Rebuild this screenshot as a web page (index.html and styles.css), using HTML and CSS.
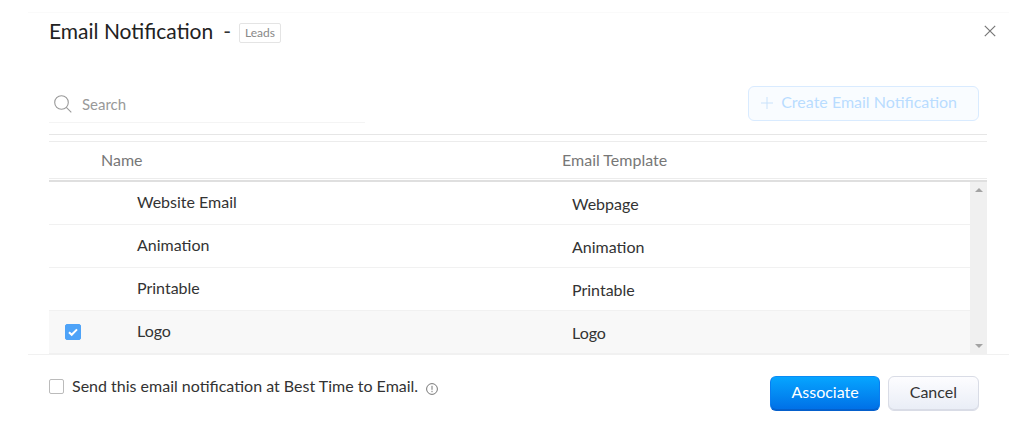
FILE: index.html
```html
<!DOCTYPE html>
<html lang="en">
<head>
  <meta charset="UTF-8" />
  <meta name="viewport" content="width=device-width, initial-scale=1.0"/>
  <title>Email Notification</title>
  <link rel="stylesheet" href="styles.css">
</head>
<body>
  <div class="dialog">
    <header class="dialog-header">
      <h1>Email Notification</h1>
      <span class="dash">-</span>
      <span class="module-tag">Leads</span>
      <button class="close-btn" type="button" aria-label="Close">
        <svg width="12" height="12" viewBox="0 0 12 12"><path d="M.8 .8 11.2 11.2M11.2 .8 .8 11.2"/></svg>
      </button>
    </header>

    <main class="dialog-body">
      <div class="toolbar">
        <label class="search">
          <svg width="18" height="18" viewBox="0 0 18 18"><circle cx="7.5" cy="7.5" r="6.8"/><path d="M12.3 12.3 17.3 17.3"/></svg>
          <input type="text" placeholder="Search" aria-label="Search" />
        </label>
        <button class="btn create-btn" type="button" disabled>
          <svg width="12" height="12" viewBox="0 0 12 12"><path d="M6 0V12M0 6H12"/></svg>
          Create Email Notification
        </button>
      </div>

      <table class="list list-head">
        <thead>
          <tr>
            <th class="col-check"></th>
            <th class="col-name">Name</th>
            <th class="col-template">Email Template</th>
          </tr>
        </thead>
      </table>

      <div class="list-scroll">
        <table class="list list-rows">
          <tbody>
            <tr>
              <td class="col-check"></td>
              <td class="col-name">Website Email</td>
              <td class="col-template">Webpage</td>
            </tr>
            <tr>
              <td class="col-check"></td>
              <td class="col-name">Animation</td>
              <td class="col-template">Animation</td>
            </tr>
            <tr>
              <td class="col-check"></td>
              <td class="col-name">Printable</td>
              <td class="col-template">Printable</td>
            </tr>
            <tr class="selected">
              <td class="col-check"><input class="check" type="checkbox" aria-label="Select Logo" checked /></td>
              <td class="col-name">Logo</td>
              <td class="col-template">Logo</td>
            </tr>
          </tbody>
        </table>
        <div class="scrollbar">
          <svg width="8" height="4" viewBox="0 0 8 4"><path d="M0 4 4 0 8 4Z"/></svg>
          <svg width="8" height="4" viewBox="0 0 8 4"><path d="M0 0 4 4 8 0Z"/></svg>
        </div>
      </div>
    </main>

    <footer class="dialog-footer">
      <div class="best-time">
        <input class="check" type="checkbox" id="best-time" />
        <label for="best-time">Send this email notification at Best Time to Email.</label>
        <svg class="info" width="12" height="12" viewBox="0 0 12 12"><circle cx="6" cy="6" r="5.4"/><path d="M6 2.8V6.8M6 7.8V9.2"/></svg>
      </div>
      <button class="btn primary-btn" type="button">Associate</button>
      <button class="btn cancel-btn" type="button">Cancel</button>
    </footer>
  </div>
</body>
</html>
```
FILE: styles.css
```css
* {
  box-sizing: border-box;
}
body {
  margin: 0;
  font-family: Lato, sans-serif;
  font-size: 16px;
  line-height: 20px;
  background: #fff;
  color: #333;
}
input, button {
  margin: 0;
  font: inherit;
}
svg {
  display: block;
  flex: none;
  fill: none;
}
.dialog {
  margin: 12px 0 0 28px;
  border-top: 1px solid #fafafa;
}

/* header */
.dialog-header {
  display: flex;
  align-items: center;
  padding: 5px 13px 0 21px;
}
.dialog-header h1 {
  margin: 0;
  font-size: 21px;
  line-height: 26px;
  font-weight: 400;
  color: #222;
}
.dash {
  margin: 0 8px 0 10px;
  font-size: 21px;
  line-height: 26px;
}
.module-tag {
  margin-top: 4px;
  padding: 0 5px;
  border: 1px solid #e4e4e4;
  border-radius: 2px;
  font-size: 12px;
  line-height: 18px;
  color: #888;
}
.close-btn {
  margin-left: auto;
  padding: 0;
  border: none;
  background: none;
  cursor: pointer;
}
.close-btn svg {
  stroke: #777;
  stroke-width: 1.2;
}

/* search and create */
.dialog-body {
  padding: 0 22px 0 21px;
}
.toolbar {
  display: flex;
  justify-content: space-between;
  align-items: flex-start;
  padding: 42px 8px 11px 0;
}
.search {
  display: flex;
  align-items: center;
  gap: 10px;
  width: 316px;
  height: 37px;
  padding-left: 5px;
  border-bottom: 1px solid #f4f4f4;
}
.search svg {
  stroke: #999;
  stroke-width: 1.1;
}
.search input {
  flex: 1;
  min-width: 0;
  padding: 0;
  border: none;
  outline: none;
  background: none;
  font-size: 15px;
}
.search input::placeholder {
  color: #999;
  opacity: 1;
}
.btn {
  height: 35px;
  padding: 0 20px 4px;
  border: 1px solid;
  border-radius: 6px;
  cursor: pointer;
}
.create-btn {
  display: flex;
  align-items: center;
  gap: 8px;
  padding: 0 21px 4px 12px;
  border-color: #d9ebff;
  background: #f9fcff;
  color: #b9dcff;
  cursor: default;
}
.create-btn svg {
  margin-top: 3px;
  stroke: #c9e2fb;
}

/* list */
.list {
  width: 100%;
  border-collapse: separate;
  border-spacing: 0;
  table-layout: fixed;
}
.list th, .list td {
  padding: 0;
  text-align: left;
  font-weight: 400;
}
.list-head {
  border-top: 1px solid #e6e6e6;
  border-bottom: 2px solid #dfdfdf;
  padding: 6px 0 1px;
}
.list-head th {
  height: 38px;
  border-top: 1px solid #ececec;
  border-bottom: 1px solid #ececec;
  color: #777;
}
.list-head .col-check {
  width: 52px;
}
.list-head .col-template {
  width: 425px;
}
.list-scroll {
  display: flex;
}
.list-rows td {
  height: 43px;
  border-bottom: 1px solid #f1f1f1;
}
.list-rows .col-check {
  width: 88px;
  padding-left: 16px;
}
.list-rows .col-name {
  padding-bottom: 2px;
}
.list-rows .col-template {
  width: 398px;
  padding-top: 2px;
}
.selected td {
  background: #f8f8f8;
}
.scrollbar {
  display: flex;
  flex-direction: column;
  justify-content: space-between;
  align-items: center;
  flex: none;
  width: 17px;
  padding: 6px 0;
  background: #f0f0f0;
}
.scrollbar svg {
  fill: #a3a3a3;
}

/* checkboxes */
.check {
  appearance: none;
  display: block;
  flex: none;
  width: 15px;
  height: 15px;
  border: 1px solid #bbb;
  border-radius: 2px;
  background: #fff;
}
.check:checked {
  width: 16px;
  height: 16px;
  border-color: #4ea3f8;
  background: #4ea3f8 url("data:image/svg+xml,%3Csvg xmlns='http://www.w3.org/2000/svg' viewBox='0 0 14 14'%3E%3Cpath d='M3 7.2 5.7 9.8 11 4.4' fill='none' stroke='white' stroke-width='2'/%3E%3C/svg%3E") center no-repeat;
}

/* footer */
.dialog-footer {
  display: flex;
  align-items: flex-start;
  gap: 8px;
  padding: 21px 30px 22px 21px;
  border-top: 1px solid #f1f1f1;
}
.best-time {
  display: flex;
  align-items: center;
  gap: 8px;
  margin-right: auto;
}
.info {
  margin-top: 6px;
  stroke: #777;
}
.primary-btn {
  border-color: #0a8cf5 #0a7df0 #0560cc;
  background: linear-gradient(#06a5ff, #006fe6);
  box-shadow: inset 0 -1px #0560cc;
  color: #fff;
}
.cancel-btn {
  padding: 0 21px 4px;
  border-color: #d9dce6;
  background: linear-gradient(#fdfdff, #e9edf6);
  box-shadow: inset 0 -1px #d9dce6;
  color: #333;
}
```
